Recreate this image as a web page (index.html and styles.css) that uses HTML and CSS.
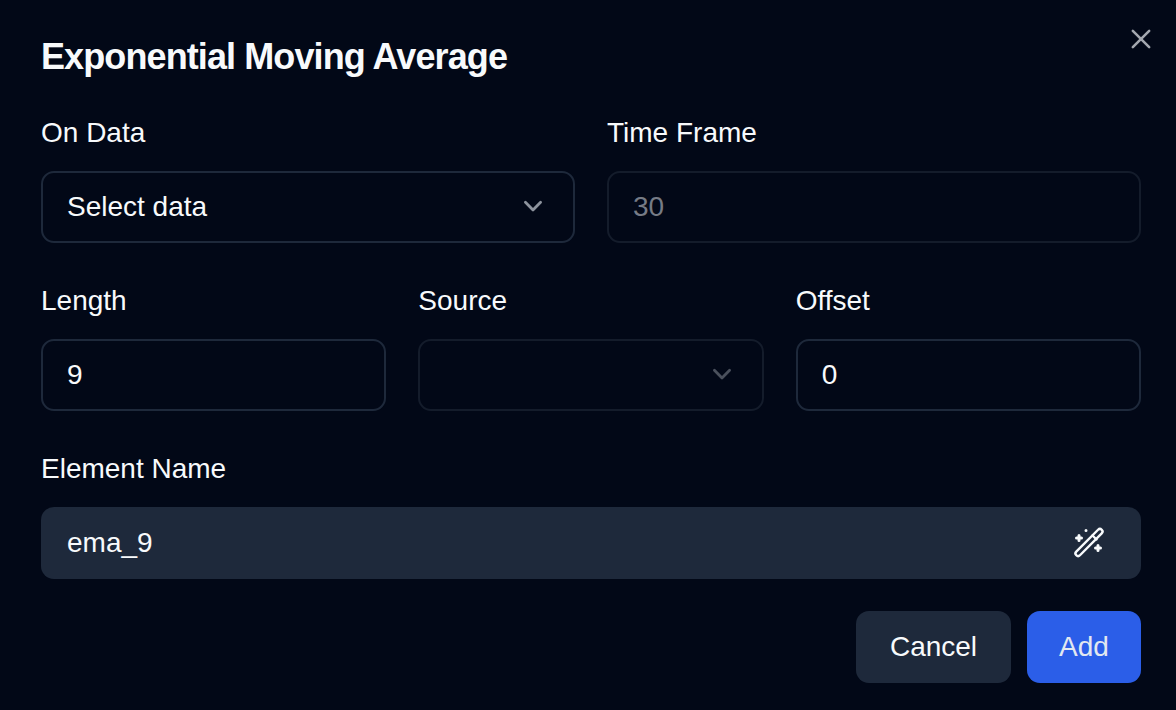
FILE: index.html
```html
<!DOCTYPE html>
<html lang="en">
<head>
<meta charset="utf-8">
<title>Exponential Moving Average</title>
<link rel="stylesheet" href="styles.css">
</head>
<body>
<div class="dialog">
  <button class="close" aria-label="Close">
    <svg viewBox="0 0 24 24" width="28" height="28" fill="none" stroke="currentColor" stroke-width="2.200" stroke-linecap="round" stroke-linejoin="round"><path d="M5 5l14 14M19 5L5 19"/></svg>
  </button>
  <h1 class="title">Exponential Moving Average</h1>
  <div class="row two">
    <div class="field">
      <label class="label">On Data</label>
      <div class="control strong">
        <span>Select data</span>
        <svg class="chev" viewBox="0 0 24 24" width="28" height="28" fill="none" stroke="currentColor" stroke-width="2.400" stroke-linecap="round" stroke-linejoin="round"><path d="M5.500 8l6.500 6.500L18.500 8"/></svg>
      </div>
    </div>
    <div class="field">
      <label class="label">Time Frame</label>
      <div class="control faint muted"><span>30</span></div>
    </div>
  </div>
  <div class="row three">
    <div class="field">
      <label class="label">Length</label>
      <div class="control strong"><span>9</span></div>
    </div>
    <div class="field">
      <label class="label">Source</label>
      <div class="control faint">
        <span></span>
        <svg class="chev dim" viewBox="0 0 24 24" width="28" height="28" fill="none" stroke="currentColor" stroke-width="2.400" stroke-linecap="round" stroke-linejoin="round"><path d="M5.500 8l6.500 6.500L18.500 8"/></svg>
      </div>
    </div>
    <div class="field">
      <label class="label">Offset</label>
      <div class="control strong"><span>0</span></div>
    </div>
  </div>
  <div class="field">
    <label class="label">Element Name</label>
    <div class="control filled">
      <span>ema_9</span>
      <svg class="wand" viewBox="0 0 32 32" width="32" height="32" fill="none" stroke="currentColor" stroke-width="2.400" stroke-linecap="round" stroke-linejoin="round">
        <rect x="-2.600" y="-18" width="5.200" height="36" rx="2.600" transform="translate(16 15.500) rotate(45)"/>
        <path d="M19.500 8.500l4 4"/>
        <path class="spark" d="M6 8.500v5M3.500 11h5M25 18.500v5M22.500 21h5M13 3.400v.2"/>
      </svg>
    </div>
  </div>
  <div class="actions">
    <button class="btn secondary">Cancel</button>
    <button class="btn primary">Add</button>
  </div>
</div>
</body>
</html>
```

FILE: styles.css
```css
* { box-sizing: border-box; }
html, body { margin: 0; height: 100%; }
body {
  background: #020817;
  color: #f8fafc;
  font-family: "Liberation Sans", Arial, sans-serif;
  overflow: hidden;
}
.dialog {
  position: relative;
  width: 1176px;
  height: 710px;
  padding: 36px 35px 27px 41px;
  display: flex;
  flex-direction: column;
}
.title {
  margin: 0 0 38px;
  font-size: 36px;
  line-height: 42px;
  font-weight: 700;
  letter-spacing: -0.9px;
  color: #f8fafc;
}
.close {
  position: absolute;
  top: 25px;
  right: 21px;
  padding: 0;
  border: 0;
  background: none;
  color: #a3a7af;
  display: flex;
}
.row { display: grid; gap: 32px; margin-bottom: 41px; }
.two { grid-template-columns: 1fr 1fr; }
.three { grid-template-columns: 1fr 1fr 1fr; }
.field { display: flex; flex-direction: column; min-width: 0; }
.label {
  font-size: 28px;
  line-height: 34px;
  font-weight: 400;
  margin-bottom: 21px;
}
.control {
  height: 72px;
  border-radius: 13px;
  border: 2px solid transparent;
  padding: 0 24px;
  font-size: 28px;
  display: flex;
  align-items: center;
  justify-content: space-between;
}
.strong { border-color: #1e293b; }
.faint { border-color: #141c2b; }
.muted { color: #767b85; }
.filled { background: #1e293b; padding-right: 36px; border: 0; padding-left: 26px; }
.chev { color: #8d939d; margin-right: 2px; }
.chev.dim { color: #4a505c; }
.wand { color: #f8fafc; }
.spark { stroke-width: 3; }
.actions { display: flex; justify-content: flex-end; gap: 16px; margin-top: 32px; }
.btn {
  height: 72px;
  border: 0;
  border-radius: 13px;
  font-family: inherit;
  font-size: 28px;
  font-weight: 400;
  color: #f8fafc;
}
.secondary { width: 155px; background: #1e293b; }
.primary { width: 114px; background: #2b5ee8; color: #e2e8f0; }
```
